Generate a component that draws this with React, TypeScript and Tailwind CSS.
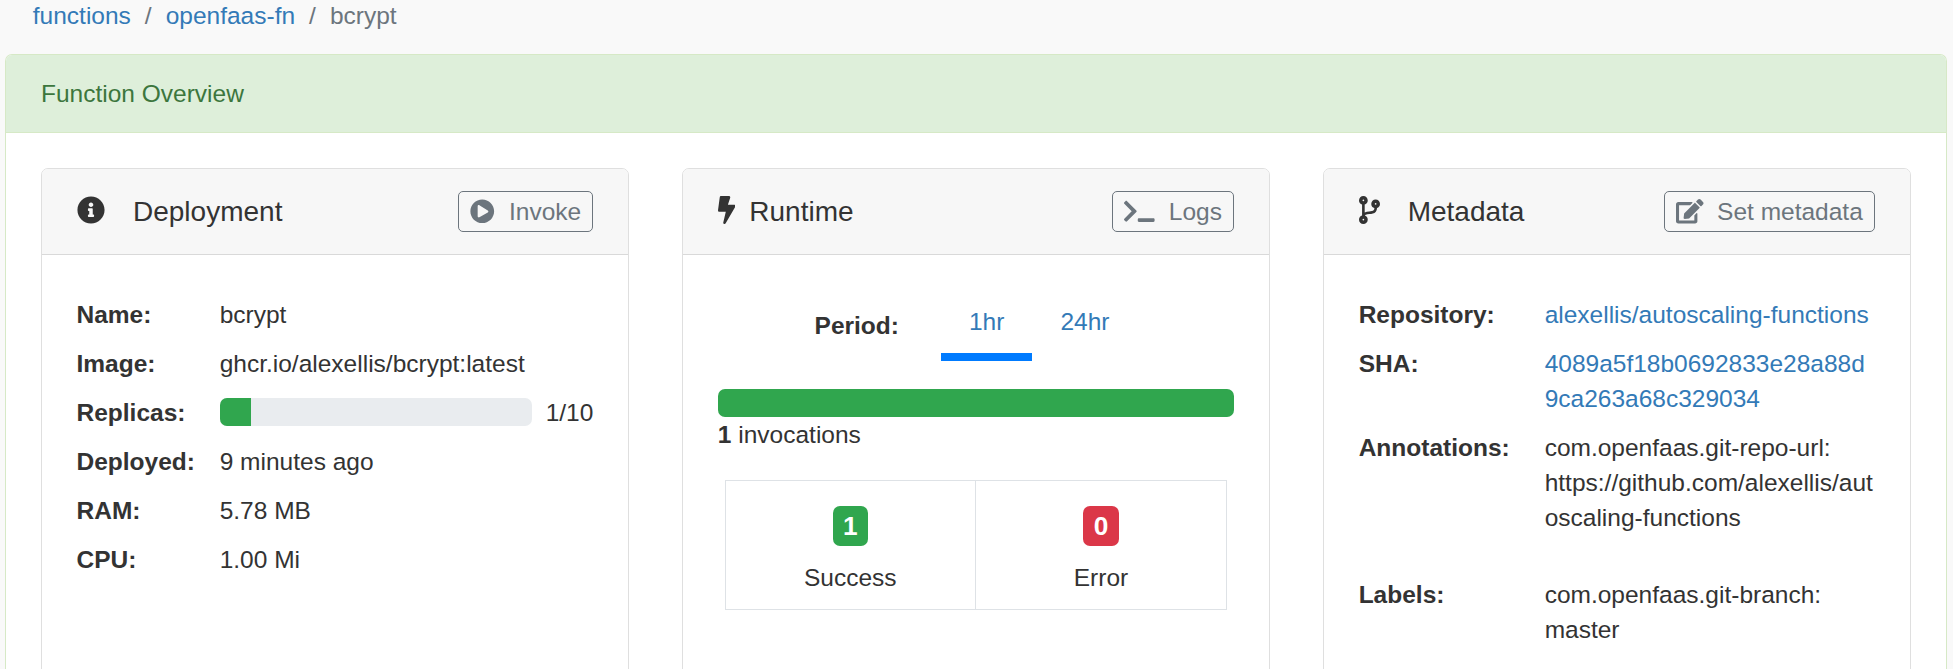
import type { ReactNode } from "react";
import { FaBolt, FaCodeBranch, FaEdit, FaInfoCircle, FaPlayCircle, FaTerminal } from "react-icons/fa";

type CardProps = {
  icon: ReactNode;
  title: string;
  titleGap: string;
  action: ReactNode;
  children: ReactNode;
};

function Card({ icon, title, titleGap, action, children }: CardProps) {
  return (
    <section className="min-w-0 rounded-t-[7px] border border-[#dfdfdf] bg-white">
      <header className="flex h-[86px] items-center justify-between rounded-t-[6px] border-b border-[#d9d9d9] bg-[#f7f7f7] px-[35px]">
        <h5 className={`flex items-center text-[28px] leading-[42px] ${titleGap}`}>
          <span className="-mt-[3px]">{icon}</span>
          {title}
        </h5>
        {action}
      </header>
      <div className="p-[35px]">{children}</div>
    </section>
  );
}

function ActionButton({ icon, label }: { icon: ReactNode; label: string }) {
  return (
    <button className="flex h-[41px] items-center gap-[13.8px] rounded-[5px] border border-[#6c757d] px-[11.2px] leading-[35px] text-[#6c757d]">
      {icon}
      <span>{label}</span>
    </button>
  );
}

function Row({ label, labelWidth, children }: { label: string; labelWidth: string; children: ReactNode }) {
  return (
    <div className="flex py-[7px]">
      <dt className={`shrink-0 font-bold ${labelWidth}`}>{label}</dt>
      <dd className="min-w-0 flex-1 break-all">{children}</dd>
    </div>
  );
}

function Stat({ value, label, color }: { value: number; label: string; color: string }) {
  return (
    <div className="flex flex-col items-center pt-[25px]">
      <span
        className={`flex h-10 w-[35.5px] items-center justify-center rounded-[7px] text-[26.25px] leading-none font-bold text-white ${color}`}
      >
        {value}
      </span>
      <span className="mt-[14px]">{label}</span>
    </div>
  );
}

export default function App() {
  return (
    <div className="flex h-[669px] flex-col overflow-hidden bg-[#f9f9f9] font-['Liberation_Sans',Arial,sans-serif] text-[24.5px] leading-[35px] text-[#333]">
      <nav className="-mt-[2px] flex h-14 shrink-0 gap-[14px] pl-[32.8px] text-[#6c757d]">
        <a className="text-[#337ab7]">functions</a>
        <span>/</span>
        <a className="text-[#337ab7]">openfaas-fn</a>
        <span>/</span>
        <span>bcrypt</span>
      </nav>

      <main className="ml-[5px] mr-[6px] flex flex-1 flex-col rounded-t-[7px] border border-b-0 border-[#d6e9c6] bg-white">
        <div className="h-[78px] shrink-0 rounded-t-[6px] border-b border-[#d6e9c6] bg-[#deefda] px-[35px] py-[21px] text-[#3c763d]">
          Function Overview
        </div>
        <div className="grid h-[620px] shrink-0 grid-cols-3 gap-[52.5px] px-[35px] pt-[35px]">
          <Card
            icon={<FaInfoCircle className="size-7" />}
            title="Deployment"
            titleGap="gap-7"
            action={<ActionButton icon={<FaPlayCircle className="mr-[0.3px]" />} label="Invoke" />}
          >
            <dl className="-ml-[0.5px]">
              <Row label="Name:" labelWidth="w-[143.2px]">bcrypt</Row>
              <Row label="Image:" labelWidth="w-[143.2px]">ghcr.io/alexellis/bcrypt:latest</Row>
              <Row label="Replicas:" labelWidth="w-[143.2px]">
                <div className="flex items-center gap-[14px]">
                  <div className="-mt-px h-7 flex-1 overflow-hidden rounded-[7px] bg-[#e9ecef]">
                    <div className="h-full w-[10%] bg-[#30a64e]" />
                  </div>
                  <span>1/10</span>
                </div>
              </Row>
              <Row label="Deployed:" labelWidth="w-[143.2px]">9 minutes ago</Row>
              <Row label="RAM:" labelWidth="w-[143.2px]">5.78 MB</Row>
              <Row label="CPU:" labelWidth="w-[143.2px]">1.00 Mi</Row>
            </dl>
          </Card>

          <Card
            icon={<FaBolt className="h-7 w-[17.5px]" />}
            title="Runtime"
            titleGap="gap-[14px]"
            action={<ActionButton icon={<FaTerminal className="h-[24.5px] w-[30.6px]" />} label="Logs" />}
          >
            <div className="flex h-[71px] justify-center">
              <span className="mr-[42px] mt-[18px] font-bold">Period:</span>
              <a className="border-b-8 border-[#007bff] px-7 py-[14px] text-[#337ab7]">1hr</a>
              <a className="px-7 py-[14px] text-[#337ab7]">24hr</a>
            </div>
            <div className="mt-7 h-7 rounded-[7px] bg-[#30a64e]" />
            <p>
              <b>1</b> invocations
            </p>
            <div className="mx-[7px] mt-7 grid h-[130px] grid-cols-[250px_1fr] divide-x divide-[#dee2e6] border border-[#dee2e6]">
              <Stat value={1} label="Success" color="bg-[#30a64e]" />
              <Stat value={0} label="Error" color="bg-[#db3748]" />
            </div>
          </Card>

          <Card
            icon={<FaCodeBranch className="h-7 w-[21px]" />}
            title="Metadata"
            titleGap="gap-7"
            action={<ActionButton icon={<FaEdit className="-mr-[0.5px] h-[24.5px] w-[27.5px]" />} label="Set metadata" />}
          >
            <dl>
              <Row label="Repository:" labelWidth="w-[186px]">
                <a className="text-[#337ab7]">alexellis/autoscaling-functions</a>
              </Row>
              <Row label="SHA:" labelWidth="w-[186px]">
                <a className="text-[#337ab7]">4089a5f18b0692833e28a88d9ca263a68c329034</a>
              </Row>
              <Row label="Annotations:" labelWidth="w-[186px]">
                <p className="mb-7">
                  com.openfaas.git-repo-url:
                  <br />
                  https://github.com/alexellis/autoscaling-functions
                </p>
              </Row>
              <Row label="Labels:" labelWidth="w-[186px]">
                <p className="mb-7">
                  com.openfaas.git-branch:
                  <br />
                  master
                </p>
              </Row>
            </dl>
          </Card>
        </div>
      </main>
    </div>
  );
}
